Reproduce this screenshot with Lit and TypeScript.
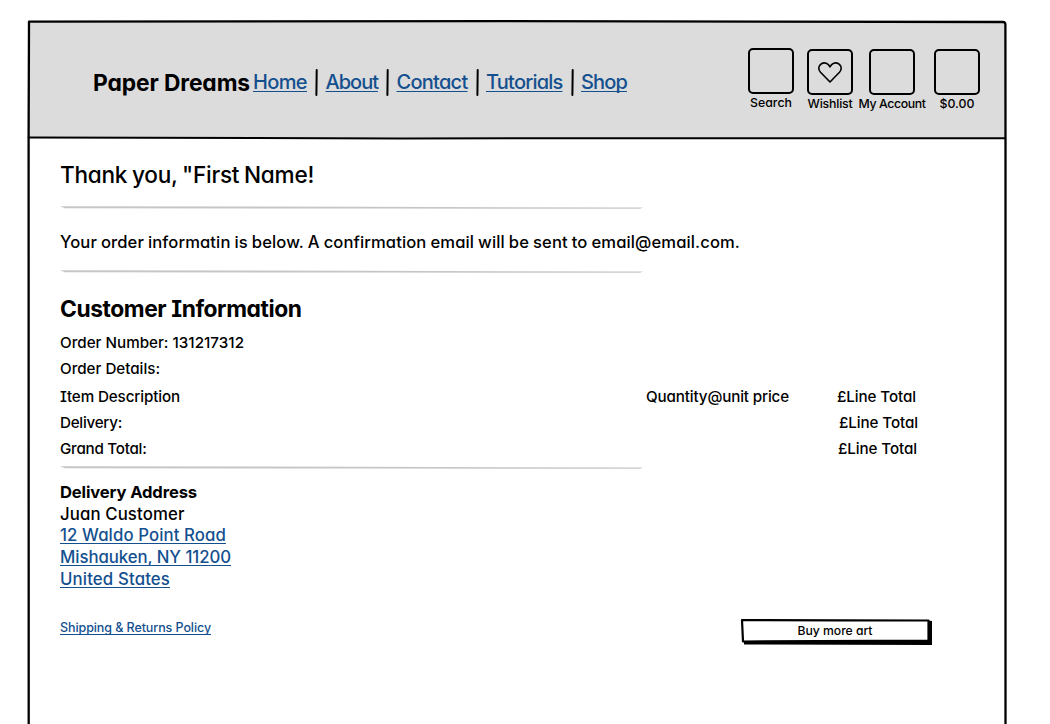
import { LitElement, html, css, svg } from "lit";
import { customElement, property } from "lit/decorators.js";

/* A single line of text whose tracking is adjusted to fill a given width. */
@customElement("sketch-text")
class SketchText extends LitElement {
  @property({ type: Number }) width = 0;
  @property({ type: Boolean }) underlined = false;
  static styles = css`
    :host { display: block; white-space: nowrap; }
    .run { display: inline-block; }
    .underlined {
      text-decoration: underline; text-decoration-thickness: 1px;
      text-underline-offset: 2px; text-decoration-skip-ink: none;
    }
  `;
  render() {
    return html`<span class="run ${this.underlined ? "underlined" : ""}"><slot></slot></span>`;
  }
  firstUpdated() {
    const run = this.renderRoot.querySelector(".run") as HTMLElement;
    const count = (this.textContent || "").trim().length;
    const natural = run.getBoundingClientRect().width;
    if (this.width && count) run.style.letterSpacing = `${(this.width - natural) / count}px`;
  }
}

@customElement("sketch-rule")
class SketchRule extends LitElement {
  static styles = css`
    :host { display: block; height: 4px; }
    svg { display: block; }
  `;
  render() {
    return html`<svg width="584" height="4" viewBox="0 0 584 4">
      <path d="M0 0.2 L3 0.3 L300 0.7 L583 1.6 L580 2.8 L300 2.6 L5 2.3 Z" fill="#c6c6c6" />
    </svg>`;
  }
}

@customElement("app-root")
class AppRoot extends LitElement {
  static styles = css`
    :host {
      display: block; position: relative; box-sizing: border-box;
      width: 1050px; height: 724px; overflow: hidden; background: #fff; color: #000;
      font-family: Inter, "Liberation Sans", sans-serif;
      font-feature-settings: "cv11" 1, "calt" 0;
      font-weight: 450;
    }
    .frame { position: absolute; left: 0; top: 0; display: block; }
    .page { position: relative; }
    header { display: flex; height: 138px; box-sizing: border-box; padding: 48px 70px 0 93px; }
    .brand { font-size: 22.8px; font-weight: 700; line-height: 32px; width: 160px; margin-top: 19px; }
    nav { display: flex; margin-top: 17px; height: 34px; font-size: 20px; line-height: 34px; }
    .bar { display: block; width: 18.5px; height: 34px; }
    .link { color: #14508f; }
    .tools { display: flex; margin-left: auto; }
    .tool { display: flex; flex-direction: column; align-items: center; font-size: 12.3px; line-height: 18px; }
    .tool svg { display: block; }
    .t0 { width: 46px; }
    .t1 { width: 46px; margin-left: 13px; padding-top: 1px; }
    .t2 { width: 46px; margin-left: 16px; padding-top: 1px; }
    .t3 { width: 46px; margin-left: 19px; padding-top: 1px; }
    main { padding-left: 60px; }
    .title { font-size: 22.6px; line-height: 32px; margin-top: 21px; word-spacing: -1px; }
    .r1 { margin-top: 15px; }
    .note { font-size: 16.6px; line-height: 24px; margin-top: 20px; word-spacing: -0.5px; }
    .r2 { margin-top: 16px; }
    h2 { margin: 19px 0 0; font-size: 22.8px; font-weight: 700; line-height: 32px; }
    .serif-i { font-feature-settings: "cv11" 1, "calt" 0, "cv08" 1; }
    .row { display: flex; font-size: 15.2px; line-height: 26px; height: 26px; }
    .number { margin-top: 5px; }
    .item { margin-top: 2px; }
    .name { width: 586px; }
    .qty { width: 191px; }
    .s2 { padding-left: 2px; }
    .s1 { padding-left: 1px; }
    .r3 { margin-top: 4px; }
    .address { margin-top: 11px; font-size: 16.8px; line-height: 21.8px; }
    .strong { font-weight: 700; font-size: 16.6px; line-height: 22.6px; }
    .foot { display: flex; margin-top: 27px; height: 28px; }
    .policy { font-size: 12.5px; line-height: 20px; width: 680px; }
    .button { display: grid; width: 192px; height: 28px; }
    .button > * { grid-area: 1 / 1; }
    .button sketch-text { justify-self: center; font-size: 12.2px; line-height: 25px; margin-right: 2px; position: relative; }
  `;

  private links: [string, number][] = [["Home", 54], ["About", 52.5], ["Contact", 71], ["Tutorials", 76.5], ["Shop", 46]];
  private tools: [string, number][] = [["Search", 42], ["Wishlist", 45], ["My Account", 67], ["$0.00", 35]];
  private lines: [string, number][] = [["12 Waldo Point Road", 166], ["Mishauken, NY 11200", 171], ["United States", 110]];

  render() {
    return html`
      <svg class="frame" width="1050" height="724" viewBox="0 0 1050 724">
        <path d="M29 22 L1005 22 L1005.5 138.3 L29 137.8 Z" fill="#dcdcdc" />
        <g fill="none" stroke="#000" stroke-linecap="round" stroke-linejoin="round">
          <path d="M28.7 724 L28.6 138 L29 21.6 L500 21.2 L1003 22 Q1005.3 22 1005.4 24.5 L1005.5 138 L1005.5 724" stroke-width="2.3" />
          <path d="M28.7 137.6 L400 138.4 L1005 138.2" stroke-width="2" />
        </g>
      </svg>
      <div class="page">
        <header>
          <sketch-text class="brand" width="157">Paper Dreams</sketch-text>
          <nav>
            ${this.links.map(([t, w], i) => html`
              ${i ? html`<svg class="bar" viewBox="0 0 18.5 34"><path d="M9.7 5 L9.4 30" stroke="#000" stroke-width="2" stroke-linecap="round" /></svg>` : ""}
              <sketch-text class="link" underlined width=${w}>${t}</sketch-text>`)}
          </nav>
          <div class="tools">
            ${this.tools.map(([t, w], i) => html`
              <div class="tool t${i}">
                <svg width="46" height="46" viewBox="0 0 46 46" fill="none" stroke="#000">
                  <rect x="1" y="1" width="44" height="44" rx="4" stroke-width="2" />
                  ${i === 1 ? svg`<path d="M23 33 L13.5 23.3 C10.7 20.2 11.5 16.5 14.4 14.7 C17.6 12.8 21.3 14.3 23 17.8 C24.7 14.3 28.4 12.8 31.6 14.7 C34.5 16.5 35.3 20.2 32.5 23.3 Z" stroke-width="1.6" stroke-linejoin="round" />` : ""}
                </svg>
                <sketch-text width=${w}>${t}</sketch-text>
              </div>`)}
          </div>
        </header>
        <main>
          <sketch-text class="title" width="254">Thank you, "First Name!</sketch-text>
          <sketch-rule class="r1"></sketch-rule>
          <sketch-text class="note" width="680">Your order informatin is below. A confirmation email will be sent to email@email.com.</sketch-text>
          <sketch-rule class="r2"></sketch-rule>
          <h2 class="serif-i"><sketch-text width="241.5">Customer Information</sketch-text></h2>
          <div class="row number"><sketch-text width="184">Order Number: 131217312</sketch-text></div>
          <div class="row"><sketch-text width="100">Order Details:</sketch-text></div>
          <div class="row item serif-i">
            <sketch-text class="name" width="120">Item Description</sketch-text>
            <sketch-text class="qty" width="143">Quantity@unit price</sketch-text>
            <sketch-text width="79">£Line Total</sketch-text>
          </div>
          <div class="row">
            <sketch-text class="name" width="62">Delivery:</sketch-text>
            <span class="qty"></span>
            <sketch-text class="s2" width="79">£Line Total</sketch-text>
          </div>
          <div class="row">
            <sketch-text class="name" width="86.5">Grand Total:</sketch-text>
            <span class="qty"></span>
            <sketch-text class="s1" width="79">£Line Total</sketch-text>
          </div>
          <sketch-rule class="r3"></sketch-rule>
          <div class="address">
            <sketch-text class="strong" width="137">Delivery Address</sketch-text>
            <sketch-text width="124.5">Juan Customer</sketch-text>
            ${this.lines.map(([t, w]) => html`<sketch-text class="link" underlined width=${w}>${t}</sketch-text>`)}
          </div>
          <div class="foot">
            <sketch-text class="policy link" underlined width="151">Shipping &amp; Returns Policy</sketch-text>
            <div class="button">
              <svg width="192" height="28" viewBox="0 0 192 28">
                <path d="M4 23 L187 2.5 L192 3 L192 27 L4 26.5 Z" fill="#000" />
                <path d="M2 2 L100 2.3 L188.5 2.5 L188.5 22.5 L3 23.5 Z" fill="#fff" stroke="#000" stroke-width="2.2" stroke-linejoin="round" />
              </svg>
              <sketch-text width="75">Buy more art</sketch-text>
            </div>
          </div>
        </main>
      </div>`;
  }
}
